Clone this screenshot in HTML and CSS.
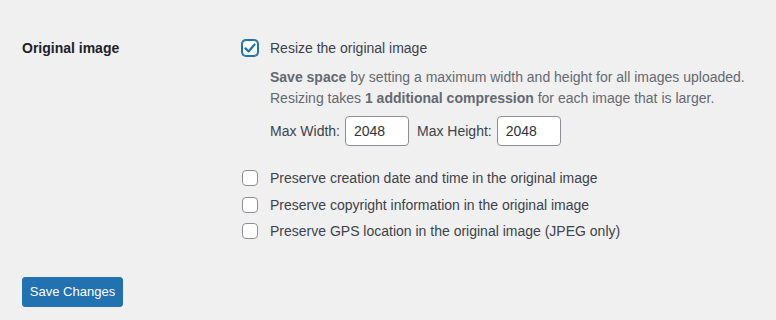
FILE: index.html
```html
<!DOCTYPE html>
<html>
<head>
<meta charset="utf-8">
<link rel="stylesheet" href="styles.css">
</head>
<body>
<div class="page">
  <div class="row">
    <div class="th">Original image</div>
    <div class="td">
      <label class="check">
        <span class="box focus">
          <svg width="14" height="14" viewBox="0 0 20 20"><path d="M3.5 10.5 L8 15 L16.5 5" fill="none" stroke="#2271b1" stroke-width="3.2" stroke-linecap="round" stroke-linejoin="round"/></svg>
        </span>
        <span>Resize the original image</span>
      </label>
      <p class="desc"><b>Save space</b> by setting a maximum width and height for all images uploaded.<br>Resizing takes <b>1 additional compression</b> for each image that is larger.</p>
      <div class="dims">
        <span>Max Width:</span><span class="input">2048</span>
        <span class="gap"></span>
        <span>Max Height:</span><span class="input">2048</span>
      </div>
      <div class="list">
        <label class="check"><span class="box"></span><span>Preserve creation date and time in the original image</span></label>
        <label class="check"><span class="box"></span><span>Preserve copyright information in the original image</span></label>
        <label class="check"><span class="box"></span><span>Preserve GPS location in the original image (JPEG only)</span></label>
      </div>
    </div>
  </div>
  <button class="btn">Save Changes</button>
</div>
</body>
</html>
```
FILE: styles.css
```css
html, body {
  margin: 0;
  background: #f0f0f1;
}
body {
  font-family: "Liberation Sans", Arial, sans-serif;
  font-size: 14px;
  color: #3c434a;
}
.page {
  padding: 38px 22px 0 22px;
}
.row {
  display: flex;
}
.th {
  width: 218px;
  font-weight: 600;
  color: #1d2327;
  line-height: 20px;
}
.td {
  display: flex;
  flex-direction: column;
}
.check {
  display: flex;
  align-items: center;
  line-height: 20px;
}
.box {
  box-sizing: border-box;
  width: 16px;
  height: 16px;
  border: 1px solid #8c8f94;
  border-radius: 4px;
  background: #fff;
  margin: 0 12px 0 2px;
  display: flex;
  align-items: center;
  justify-content: center;
}
.box.focus {
  border-color: #2271b1;
  box-shadow: 0 0 0 1px #2271b1;
}
.desc {
  margin: 9px 0 0 30px;
  color: #646970;
  line-height: 21px;
}
.desc b {
  font-weight: 600;
}
.dims {
  margin: 7px 0 0 30px;
  display: flex;
  align-items: center;
}
.dims .input {
  box-sizing: border-box;
  width: 64px;
  height: 30px;
  border: 1px solid #8c8f94;
  border-radius: 4px;
  background: #fff;
  color: #2c3338;
  padding: 0 8px;
  line-height: 28px;
  margin-left: 5px;
}
.dims .gap {
  width: 8px;
}
.list {
  margin-top: 22px;
  display: flex;
  flex-direction: column;
  gap: 6.5px;
}
.btn {
  margin-top: 36px;
  box-sizing: border-box;
  width: 101px;
  height: 30px;
  padding: 0;
  background: #2271b1;
  border: 1px solid #2271b1;
  border-radius: 3px;
  color: #fff;
  font-family: inherit;
  font-size: 13px;
  line-height: 28px;
  cursor: pointer;
}
```
